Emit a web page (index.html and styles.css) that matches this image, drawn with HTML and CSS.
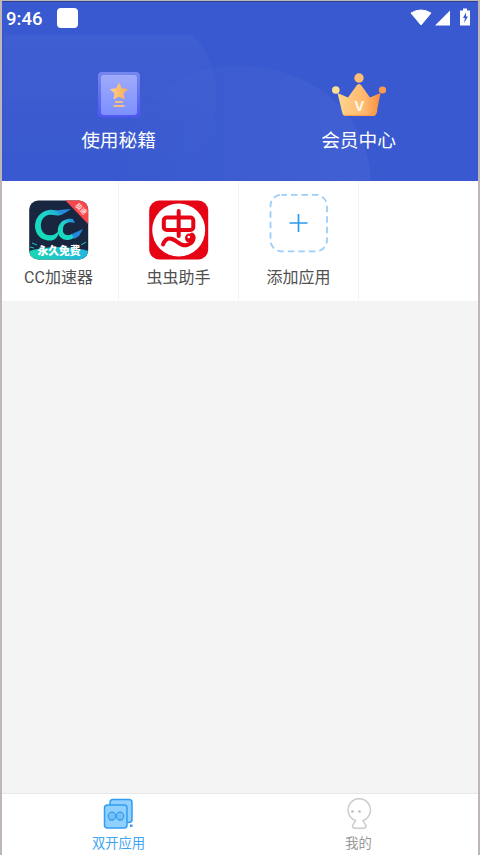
FILE: index.html
```html
<!DOCTYPE html>
<html lang="zh-CN">
<head>
<meta charset="utf-8">
<title>双开应用</title>
<link rel="stylesheet" href="styles.css">
</head>
<body>
<div class="screen">
  <header class="hero">
    <svg class="hero-bg" viewBox="0 0 476 180" aria-hidden="true">
      <defs>
        <linearGradient id="arcB"><stop offset="0" stop-color="#fff" stop-opacity="0"/><stop offset="1" stop-color="#fff" stop-opacity=".04"/></linearGradient>
        <linearGradient id="fade" x2="0" y2="1"><stop stop-color="#fff"/><stop offset="1" stop-color="#000"/></linearGradient>
        <mask id="fadeMask"><rect width="476" height="180" fill="url(#fade)"/></mask>
      </defs>
      <path d="M0 33H190Q214 57 214 94Q214 142 180 180H0Z" fill="#fff" fill-opacity=".04" mask="url(#fadeMask)"/>
      <path d="M100 180C118 105 175 64 235 64C310 64 369 114 369 180Z" fill="url(#arcB)"/>
    </svg>
    <div class="status">
      <span class="clock">9:46</span><span class="notice"></span>
      <svg class="signals" width="62" height="20" viewBox="0 0 62 20" fill="#fff">
        <path d="M1 5Q11-1 21 5L11 17Z" stroke="#fff" stroke-linejoin="round"/>
        <path d="M25 17.500L40 2.500V17.500Z"/>
        <path d="M50 2.500H53V.5H57V2.500H60V17.500H50Z"/>
        <path d="M56 4.500L53 10H55L54 15L58 8.500H56Z" fill="#3959d0"/>
      </svg>
    </div>
    <nav class="shortcuts">
      <a class="shortcut">
        <svg width="60" height="50" viewBox="0 0 60 50">
          <defs>
            <linearGradient id="edge" x2="0" y2="1"><stop stop-color="#7587ef"/><stop offset="1" stop-color="#4f56f3"/></linearGradient>
            <linearGradient id="card" x2="0" y2="1"><stop stop-color="#a0aafa"/><stop offset="1" stop-color="#7c91ff"/></linearGradient>
            <linearGradient id="gold"><stop stop-color="#ffd188"/><stop offset="1" stop-color="#f5ab5b"/></linearGradient>
          </defs>
          <rect x="9" y="2" width="42" height="45.500" rx="4" fill="url(#edge)"/>
          <rect x="12" y="5" width="36" height="40" rx="3" fill="url(#card)"/>
          <path d="M30 12.500L32.800 18.200L39 19L34.500 23.400L35.700 29.600L30 26.700L24.300 29.600L25.500 23.400L21 19L27.200 18.200Z" fill="url(#gold)"/>
          <path d="M26 32H34M24.500 36H35.500" stroke="#f5bd85" stroke-width="1.800"/>
        </svg>
        <span>使用秘籍</span>
      </a>
      <a class="shortcut">
        <svg width="60" height="50" viewBox="0 0 60 50">
          <defs><linearGradient id="crown"><stop stop-color="#ffd58d"/><stop offset=".65" stop-color="#ffb76c"/><stop offset="1" stop-color="#f98c3b"/></linearGradient></defs>
          <path d="M8.500 23L19 27.500L28 15Q30 13 32 15L41 27.500L51.500 23L47.500 43Q47 46 44 46H17Q14 46 13.300 43Z" fill="url(#crown)"/>
          <path d="M15 45.300H45Q47 44 48 40" fill="none" stroke="#ff9b42" stroke-width="1"/>
          <circle cx="30" cy="8" r="4.700" fill="#fdbd75"/><circle cx="6.800" cy="20" r="3.800" fill="#ffe093"/><circle cx="53.500" cy="20" r="3.600" fill="#fb994d"/>
          <text x="30.300" y="40.800" class="crown-v">V</text>
        </svg>
        <span>会员中心</span>
      </a>
    </nav>
  </header>

  <main class="apps">
    <div class="app">
      <svg width="60" height="60" viewBox="0 0 60 60">
        <defs>
          <linearGradient id="cyan" x1="0" y1="1" x2="1" y2="0"><stop stop-color="#12dfb3"/><stop offset=".6" stop-color="#1ed3cf"/><stop offset="1" stop-color="#2875e2"/></linearGradient>
          <linearGradient id="banner"><stop stop-color="#1bd6b2"/><stop offset="1" stop-color="#20b6df"/></linearGradient>
          <clipPath id="tile"><rect x=".2" y=".5" width="59" height="59" rx="9"/></clipPath>
        </defs>
        <g clip-path="url(#tile)">
          <rect width="60" height="60" fill="#192640"/>
          <path d="M36 0H60V25Z" fill="#f8474c"/>
          <text class="ribbon" transform="translate(50.500 10.500) rotate(45)">极速</text>
          <path d="M0 51Q29 43 60 51V60H0Z" fill="url(#banner)"/>
          <path d="M20 10C26 9 32 13 41 9L33 14.500C27 17 24 14 19 15C9 18 10 34 19 35C24 36 28 34 30 30C30 39 23 42 17 40C2 37 2 13 20 10Z" fill="url(#cyan)"/>
          <path d="M30 10L42 9L36 13L30 14Z" fill="#268ce1"/>
          <path d="M44 19C39 18 31 20 29 28C27 38 38 44 46 37L43 34C38 37 33 34 34 29C34 24 39 21 46 23Z" fill="url(#cyan)"/>
          <path d="M43 34L54 29L50 36L45 39Z" fill="#2587dd"/>
          <path d="M3 43L8 45M1 47L5 48M52 45L57 42" stroke="#1bcbbc"/>
          <text class="banner-text" x="30" y="55">永久免费</text>
        </g>
      </svg>
      <span>CC加速器</span>
    </div>
    <div class="app">
      <svg width="60" height="60" viewBox="0 0 60 60" fill="none">
        <rect x=".2" y=".5" width="59" height="59" rx="10" fill="#e60313"/>
        <circle cx="29.700" cy="30" r="26.500" fill="#fff"/>
        <g stroke="#e60313" stroke-width="4" stroke-linecap="round">
          <rect x="14.800" y="17.500" width="29.500" height="12.500" rx="3"/>
          <path d="M29.700 11V36M14 44.500Q17 37 23 39C29 41 32 47 38 45C45 43 46 37 43 34.500"/>
        </g>
        <circle cx="40.500" cy="38" r="4.500" fill="#e60313"/>
        <circle cx="39.800" cy="37" r="1.300" fill="#fff"/>
      </svg>
      <span>虫虫助手</span>
    </div>
    <div class="app app-add">
      <svg width="60" height="60" viewBox="0 0 60 60" fill="none">
        <rect x="1.500" y="1.800" width="56.500" height="56.500" rx="11" stroke="#99cffa" stroke-width="1.800" stroke-dasharray="6.500 4" stroke-dashoffset="1"/>
        <path d="M20.500 30H38.500M29.500 21V39" stroke="#2d9bf0" stroke-width="1.700"/>
      </svg>
      <span>添加应用</span>
    </div>
    <div class="app app-empty"></div>
  </main>

  <nav class="tabs">
    <a class="tab tab-active">
      <svg width="32" height="32" viewBox="0 0 32 32" fill="#8fd0ff" stroke="#329df2" stroke-width="1.500">
        <rect x="7" y="1.500" width="22" height="23" rx="3"/>
        <rect x="1.500" y="7" width="22.500" height="23" rx="3"/>
        <g fill="#77bef5" stroke-width="1.200"><circle cx="9" cy="18" r="3.800"/><circle cx="17" cy="18" r="3.800"/><path d="M6 22H11M15 22H20"/></g>
        <rect x="27" y="26.500" width="2.500" height="2.500" fill="#329df2" stroke="none"/>
      </svg>
      <span>双开应用</span>
    </a>
    <a class="tab">
      <svg width="32" height="32" viewBox="0 0 32 32" fill="none" stroke="#ccc" stroke-width="1.500">
        <path d="M12.500 22.500A11.200 11.200 0 1 1 20 22.500C20 24.500 23 25.500 23 28.300Q23 30.200 20 30.200H12.500Q9.500 30.200 9.500 28.300C9.500 25.500 12.500 24.500 12.500 22.500Z"/>
        <g fill="#bbb" stroke="none"><circle cx="9.500" cy="13.500" r="1.300"/><circle cx="16.500" cy="13.500" r="1.300"/></g>
      </svg>
      <span>我的</span>
    </a>
  </nav>
</div>
</body>
</html>
```
FILE: styles.css
```css
* { box-sizing: border-box; }

body {
  margin: 0;
  font-family: Roboto, "Noto Sans CJK SC", sans-serif;
}

svg { display: block; }

.screen {
  display: flex;
  flex-direction: column;
  width: 480px;
  height: 855px;
  overflow: hidden;
  background: #f4f4f4;
  border: solid #beb6b8;
  border-width: 1px 2px 0;
}

.hero {
  position: relative;
  height: 180px;
  background: #3959d0;
  border-top: 1px solid #2d438f;
  color: #fff;
}

.hero-bg {
  position: absolute;
  inset: 0;
  width: 476px;
  height: 179px;
}

.status {
  position: relative;
  display: flex;
  align-items: center;
  height: 32px;
  padding: 0 6px 0 4px;
}

.clock {
  width: 51px;
  font-size: 18.5px;
  font-weight: 500;
  line-height: 32px;
  padding-top: 2px;
}

.notice {
  width: 21px;
  height: 20px;
  border-radius: 4px;
  background: #fff;
}

.signals { margin-left: auto; }

.shortcuts {
  position: relative;
  display: grid;
  grid-template-columns: 240px 240px;
  margin: 36px 0 0 -3px;
}

.shortcut {
  display: flex;
  flex-direction: column;
  align-items: center;
  gap: 8px;
  padding-right: 1px;
  font-size: 18.7px;
  line-height: 26px;
}

.crown-v {
  font: 700 15px "Open Sans", sans-serif;
  fill: #fff8e5;
  text-anchor: middle;
}

.apps {
  display: grid;
  grid-template-columns: repeat(4, 120px);
  height: 120px;
  margin-left: -3px;
  background: #fff;
}

.app {
  display: flex;
  flex-direction: column;
  align-items: center;
  justify-content: space-between;
  padding: 19px 0 12px;
  border-right: 1px solid #f3f3f3;
  color: #505050;
  font-size: 16px;
  line-height: 23px;
}

.app-add { padding-top: 12px; }
.app-empty { border-right: 0; }

.ribbon {
  font: 700 6.5px "Noto Sans CJK SC", sans-serif;
  fill: #ffd8d5;
  text-anchor: middle;
}

.banner-text {
  font: 900 10.8px "Noto Sans CJK SC", sans-serif;
  fill: #fff;
  text-anchor: middle;
}

.tabs {
  display: grid;
  grid-template-columns: 240px 240px;
  height: 62px;
  margin: auto -1px 0 -3px;
  background: #fff;
  border-top: 1px solid #e8e8e8;
}

.tab {
  display: flex;
  flex-direction: column;
  align-items: center;
  padding: 4px 1px 0 0;
  gap: 4px;
  color: #999;
  font-size: 13.3px;
  line-height: 20px;
}

.tab-active { color: #40a5f2; }
```
